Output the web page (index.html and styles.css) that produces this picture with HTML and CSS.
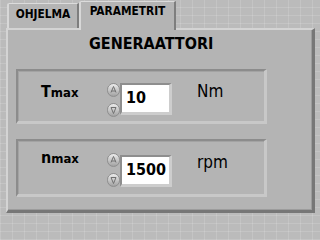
FILE: index.html
```html
<!DOCTYPE html>
<html>
<head>
<meta charset="utf-8">
<link rel="stylesheet" href="styles.css">
</head>
<body>
<div class="window">
  <div class="tabs">
    <div class="tab">OHJELMA</div>
    <div class="tab active">PARAMETRIT</div>
  </div>
  <div class="panel">
    <div class="title">GENERAATTORI</div>
    <div class="group g1">
      <div class="label"><span class="big">T</span><span class="small">max</span></div>
      <div class="spin">
        <span class="btn"><svg viewBox="0 0 13 14" width="13" height="14"><path d="M4 9.5 L6.5 3.5 L9 9.5 M4.5 8 H8.5" fill="none" stroke="#707070" stroke-width="1"/></svg></span>
        <span class="btn"><svg viewBox="0 0 13 14" width="13" height="14"><path d="M4 4.5 L6.5 10.5 L9 4.5 M4 4.5 H9" fill="none" stroke="#707070" stroke-width="1"/></svg></span>
      </div>
      <div class="num">10</div>
      <div class="unit">Nm</div>
    </div>
    <div class="group g2">
      <div class="label"><span class="big">n</span><span class="small">max</span></div>
      <div class="spin">
        <span class="btn"><svg viewBox="0 0 13 14" width="13" height="14"><path d="M4 9.5 L6.5 3.5 L9 9.5 M4.5 8 H8.5" fill="none" stroke="#707070" stroke-width="1"/></svg></span>
        <span class="btn"><svg viewBox="0 0 13 14" width="13" height="14"><path d="M4 4.5 L6.5 10.5 L9 4.5 M4 4.5 H9" fill="none" stroke="#707070" stroke-width="1"/></svg></span>
      </div>
      <div class="num">1500</div>
      <div class="unit">rpm</div>
    </div>
  </div>
</div>
</body>
</html>
```

FILE: styles.css
```css
html, body {
  margin: 0;
  padding: 0;
}
body {
  width: 318px;
  height: 216px;
  overflow: hidden;
  background-color: #bbbbbb;
  background-image:
    repeating-linear-gradient(0deg, rgba(255,255,255,0.13) 0 1px, transparent 1px 8px),
    repeating-linear-gradient(90deg, rgba(255,255,255,0.13) 0 1px, transparent 1px 12px);
  font-family: "DejaVu Sans Condensed", "DejaVu Sans", sans-serif;
  font-stretch: condensed;
  color: #000;
}
.window {
  padding: 1px 0 0 6px;
}
.tabs {
  display: flex;
  align-items: flex-end;
  margin-left: 1px;
  height: 27px;
}
.tab {
  box-sizing: border-box;
  width: 72px;
  height: 25px;
  background: #b5b5b5;
  border-top: 1px solid #dcdcdc;
  border-left: 2px solid #d8d8d8;
  border-right: 2px solid #7e7e7e;
  border-top-left-radius: 2px;
  font-size: 11.8px;
  font-weight: bold;
  line-height: 12px;
  padding-top: 4px;
  text-align: center;
  white-space: nowrap;
}
.tab.active {
  position: relative;
  z-index: 1;
  width: 97px;
  height: 29px;
  margin-bottom: -2px;
  padding-top: 3px;
  background: #b4b4b4;
}
.panel {
  box-sizing: border-box;
  width: 309px;
  height: 185px;
  background: #b4b4b4;
  border-top: 2px solid #d4d4d4;
  border-left: 2px solid #d4d4d4;
  border-right: 3px solid #777777;
  border-bottom: 3px solid #777777;
  box-shadow: inset -1px -1px 0 #9c9c9c;
}
.title {
  padding: 6px 0 0 81px;
  font-size: 16px;
  line-height: 16px;
  font-weight: bold;
  height: 16px;
}
.group {
  box-sizing: border-box;
  width: 251px;
  margin-left: 8px;
  border-top: 2px solid #8c8c8c;
  border-left: 2px solid #8c8c8c;
  border-right: 3px solid #c8c8c8;
  border-bottom: 3px solid #c8c8c8;
  box-shadow: inset 1px 1px 0 #a3a3a3;
  display: flex;
  align-items: flex-start;
  padding-left: 23px;
}
.g1 {
  margin-top: 17px;
  height: 55px;
}
.g2 {
  margin-top: 15px;
  height: 58px;
}
.label {
  width: 66px;
  font-weight: bold;
  line-height: 16px;
  white-space: nowrap;
}
.big {
  font-size: 16px;
}
.small {
  font-size: 13px;
}
.g1 .label { margin-top: 13px; }
.g2 .label { margin-top: 9px; }
.spin {
  width: 13px;
  margin-top: 12px;
  display: flex;
  flex-direction: column;
  gap: 6px;
}
.btn {
  display: block;
  box-sizing: border-box;
  width: 13px;
  height: 14px;
  border-radius: 6.5px;
  border: 1px solid #8e8e8e;
  background: linear-gradient(#ececec, #c4c4c4 55%, #a2a2a2);
}
.btn svg {
  display: block;
  margin: -1px;
}
.num {
  box-sizing: border-box;
  width: 52px;
  height: 32px;
  background: #ffffff;
  border-top: 2px solid #8e8e8e;
  border-left: 2px solid #8e8e8e;
  border-right: 3px solid #cdcdcd;
  border-bottom: 3px solid #cdcdcd;
  padding-left: 4px;
  font-size: 16px;
  font-weight: bold;
  line-height: 26px;
}
.g1 .num { margin-top: 12px; }
.g2 .num { margin-top: 14px; }
.unit {
  margin-left: 25px;
  font-size: 17px;
  line-height: 17px;
}
.g1 .unit { margin-top: 12px; }
.g2 .unit { margin-top: 13px; }
```
